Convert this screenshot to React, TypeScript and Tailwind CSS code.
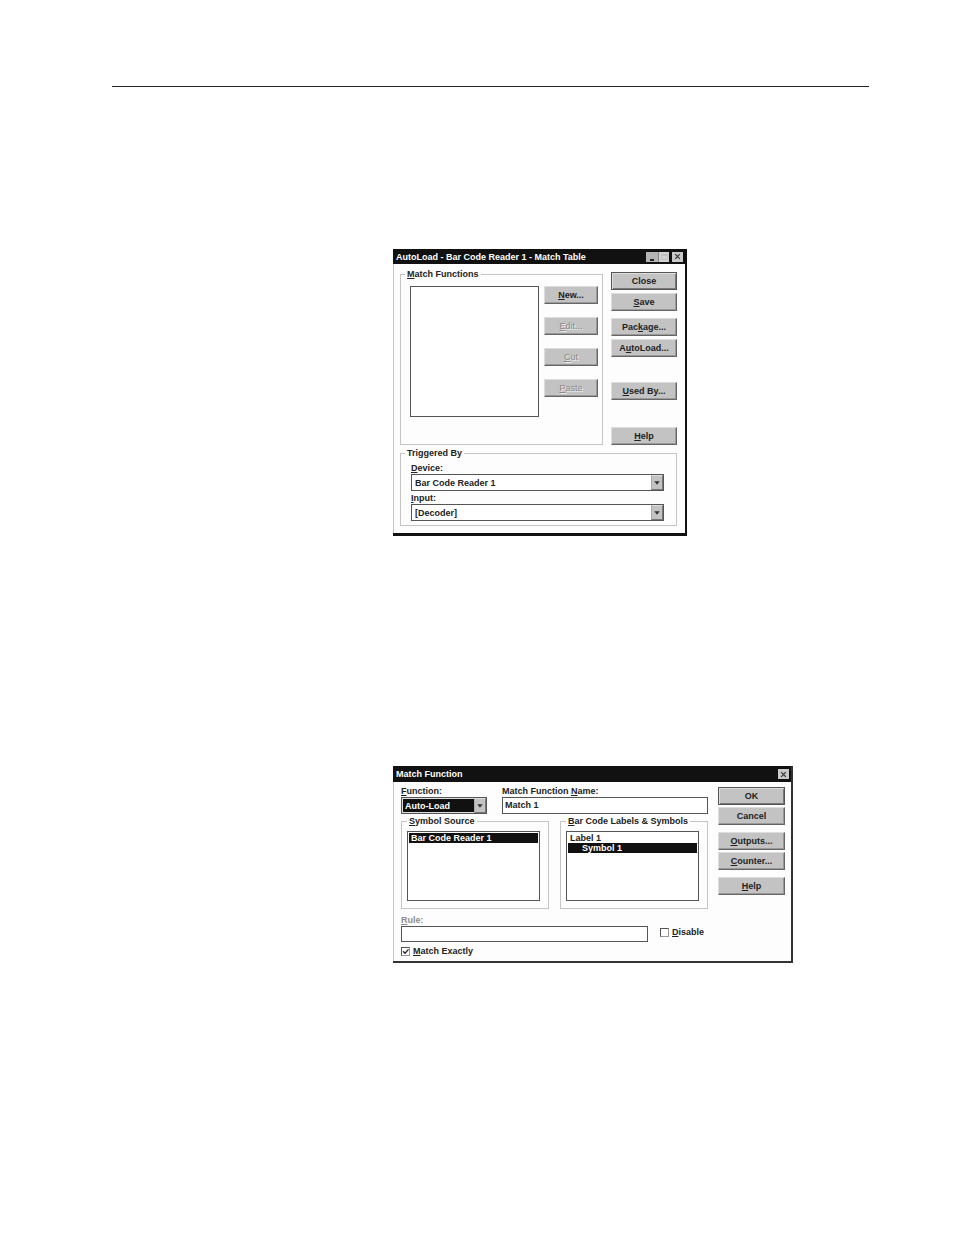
import type { ReactNode } from "react";

const listClass =
    "block w-full appearance-none overflow-hidden rounded-none border border-[#555] bg-white p-px text-[9px] font-bold outline-none";
const optionClass =
    "min-h-0 p-0 pl-0.5 text-[9px] leading-[10px] font-bold text-[#222] checked:bg-[#111] checked:bg-[linear-gradient(#111,#111)] checked:text-white";

function PushButton({
    children,
    className = "",
    isDefault = false,
    disabled = false,
}: {
    children: ReactNode;
    className?: string;
    isDefault?: boolean;
    disabled?: boolean;
}) {
    return (
        <button
            type="button"
            disabled={disabled}
            className={`flex h-[18px] w-full items-center justify-center border bg-[#c3c3c3] whitespace-nowrap ${
                isDefault
                    ? "border-[#555] shadow-[inset_1px_1px_0_#ddd,inset_-1px_-1px_0_#777]"
                    : "border-t-[#ddd] border-r-[#666] border-b-[#666] border-l-[#ddd] shadow-[inset_-1px_-1px_0_#999]"
            } ${disabled ? "font-normal text-[#888] [text-shadow:1px_1px_0_#eee]" : "font-bold text-[#222]"} ${className}`}
        >
            <span>{children}</span>
        </button>
    );
}

function Group({ legend, className = "", children }: { legend: ReactNode; className?: string; children: ReactNode }) {
    return (
        <fieldset className={`min-w-0 border border-[#c4c4c4] ${className}`}>
            <legend className="px-0.5">{legend}</legend>
            {children}
        </fieldset>
    );
}

function DropDown({ id, value, highlighted = false }: { id: string; value: string; highlighted?: boolean }) {
    return (
        <div className="relative">
            <select
                id={id}
                className={`block h-[17px] w-full appearance-none rounded-none border border-[#555] pl-[3px] text-[9px] leading-[12px] font-bold outline-none ${
                    highlighted ? "bg-[#111] text-white shadow-[inset_0_0_0_1px_#ddd]" : "bg-white text-[#222]"
                }`}
            >
                <option>{value}</option>
            </select>
            <span className="pointer-events-none absolute inset-y-px right-px flex w-3 items-center justify-center border border-t-[#ddd] border-r-[#777] border-b-[#777] border-l-[#aaa] bg-[#c3c3c3]">
                <svg viewBox="0 0 6 4" className="h-1 w-1.5" fill="#333">
                    <path d="M0.3 0.3h5.4L3 3.8z" />
                </svg>
            </span>
        </div>
    );
}

function CheckBox({ children, checked = false }: { children: ReactNode; checked?: boolean }) {
    return (
        <label className="flex items-center gap-[3px] whitespace-nowrap">
            <span className="relative flex">
                <input
                    type="checkbox"
                    defaultChecked={checked}
                    className="peer size-[9px] appearance-none border border-t-[#555] border-r-[#999] border-b-[#999] border-l-[#555] bg-white"
                />
                <svg
                    viewBox="0 0 9 9"
                    className="pointer-events-none absolute inset-0 hidden size-[9px] peer-checked:block"
                    fill="none"
                    stroke="#222"
                    strokeWidth="1.3"
                >
                    <path d="M2 4.2L4 6.2L7.5 2.4" />
                </svg>
            </span>
            <span>{children}</span>
        </label>
    );
}

function CloseButton() {
    return (
        <button type="button" aria-label="Close window" className="flex h-2.5 w-[11px] items-center justify-center bg-[#c9c9c9]">
            <svg viewBox="0 0 7 7" className="size-[7px]" stroke="#333" strokeWidth="1.2">
                <path d="M1.2 1.2L5.8 5.8M5.8 1.2L1.2 5.8" />
            </svg>
        </button>
    );
}

function MatchTableDialog() {
    return (
        <section className="w-full max-w-[294px] border-r-2 border-b-3 border-[#111] bg-[#fdfdfd]">
            <header className="flex h-[15px] items-center bg-[#111] pr-0.5 pl-[3px] text-white">
                <h2 className="flex-1 whitespace-nowrap">AutoLoad - Bar Code Reader 1 - Match Table</h2>
                <button type="button" aria-label="Minimize" className="flex h-2.5 w-3 items-end justify-center bg-[#b5b5b5] pb-px">
                    <span className="h-0.5 w-1 bg-[#222]" />
                </button>
                <button type="button" aria-label="Maximize" disabled className="mr-[3px] flex h-2.5 w-[11px] items-center justify-center border-l border-[#888] bg-[#d2d2d2]">
                    <span className="h-1.5 w-[7px] border border-t-2 border-[#c0c0c0]" />
                </button>
                <CloseButton />
            </header>
            <div className="border-l border-[#c4c4c4] pt-1 pr-2 pb-[7px] pl-1.5">
                <div className="flex gap-2">
                    <Group legend={<><u>M</u>atch Functions</>} className="flex-1 px-1">
                        <div className="flex gap-[5px] pt-1.5 pl-[5px]">
                            <select size={8} aria-label="Match Functions" className={`${listClass} h-[131px] min-w-0 flex-1`} />
                            <div className="flex w-[54px] flex-col gap-[13px]">
                                <PushButton><u>N</u>ew...</PushButton>
                                <PushButton disabled><u>E</u>dit...</PushButton>
                                <PushButton disabled><u>C</u>ut</PushButton>
                                <PushButton disabled><u>P</u>aste</PushButton>
                            </div>
                        </div>
                    </Group>
                    <div className="flex w-[66px] flex-col pt-1">
                        <PushButton isDefault>Close</PushButton>
                        <PushButton className="mt-[3px]"><u>S</u>ave</PushButton>
                        <PushButton className="mt-[7px]">Pac<u>k</u>age...</PushButton>
                        <PushButton className="mt-[3px]">A<u>u</u>toLoad...</PushButton>
                        <PushButton className="mt-[25px]"><u>U</u>sed By...</PushButton>
                        <PushButton className="mt-[27px]"><u>H</u>elp</PushButton>
                    </div>
                </div>
                <Group legend="Triggered By" className="mt-0.5 px-1 pb-1">
                    <div className="pt-[3px] pr-2 pl-1.5">
                        <label htmlFor="device" className="block"><u>D</u>evice:</label>
                        <DropDown id="device" value="Bar Code Reader 1" />
                        <label htmlFor="input" className="mt-px block"><u>I</u>nput:</label>
                        <DropDown id="input" value="[Decoder]" />
                    </div>
                </Group>
            </div>
        </section>
    );
}

function MatchFunctionDialog() {
    return (
        <section className="w-full max-w-[400px] border-r-2 border-b-2 border-[#333] bg-[#fdfdfd]">
            <header className="flex h-4 items-center bg-[#111] pr-0.5 pl-[3px] text-white">
                <h2 className="flex-1">Match Function</h2>
                <CloseButton />
            </header>
            <div className="flex gap-2.5 border-l border-[#c4c4c4] pt-[3px] pr-1.5 pb-1 pl-[7px]">
                <div className="min-w-0 flex-1">
                    <div className="flex gap-[15px]">
                        <div className="w-[86px]">
                            <label htmlFor="function" className="block"><u>F</u>unction:</label>
                            <DropDown id="function" value="Auto-Load" highlighted />
                        </div>
                        <div className="flex-1">
                            <label htmlFor="name" className="block">Match Function <u>N</u>ame:</label>
                            <input
                                id="name"
                                type="text"
                                defaultValue="Match 1"
                                className="block h-[17px] w-full border border-[#555] bg-white px-0.5 pb-0.5 font-bold outline-none"
                            />
                        </div>
                    </div>
                    <div className="mt-px flex gap-[11px]">
                        <Group legend={<><u>S</u>ymbol Source</>} className="flex-1 px-[5px] pb-[7px]">
                            <div className="pt-1 pr-[3px]">
                                <select size={6} aria-label="Symbol Source" defaultValue="reader" className={`${listClass} h-[70px]`}>
                                    <option value="reader" className={optionClass}>Bar Code Reader 1</option>
                                </select>
                            </div>
                        </Group>
                        <Group legend={<><u>B</u>ar Code Labels &amp; Symbols</>} className="flex-1 px-[5px] pb-[7px]">
                            <div className="pt-1 pr-[3px]">
                                <select size={6} aria-label="Bar Code Labels and Symbols" defaultValue="symbol" className={`${listClass} h-[70px]`}>
                                    <option value="label" className={optionClass}>Label 1</option>
                                    <option value="symbol" className={`${optionClass} indent-3`}>Symbol 1</option>
                                </select>
                            </div>
                        </Group>
                    </div>
                    <div className="mt-[5px] flex items-end gap-3">
                        <div className="flex-1">
                            <label htmlFor="rule" className="block text-[#8c8c8c]"><u>R</u>ule:</label>
                            <input id="rule" type="text" className="block h-4 w-full border border-[#555] bg-white px-0.5 font-bold outline-none" />
                        </div>
                        <div className="flex h-5 w-12 items-center">
                            <CheckBox><u>D</u>isable</CheckBox>
                        </div>
                    </div>
                    <div className="mt-[3px]">
                        <CheckBox checked><u>M</u>atch Exactly</CheckBox>
                    </div>
                </div>
                <div className="flex w-[67px] flex-col pt-0.5">
                    <PushButton isDefault>OK</PushButton>
                    <PushButton className="mt-0.5">Cancel</PushButton>
                    <PushButton className="mt-[7px]"><u>O</u>utputs...</PushButton>
                    <PushButton className="mt-0.5"><u>C</u>ounter...</PushButton>
                    <PushButton className="mt-[7px]"><u>H</u>elp</PushButton>
                </div>
            </div>
        </section>
    );
}

export default function App() {
    return (
        <main className="min-h-screen bg-white pt-[86px] pr-[85px] pb-12 pl-28 font-['Liberation_Sans',Arial,sans-serif] text-[9px] leading-[12px] font-bold text-[#222]">
            <hr className="border-t border-[#222]" />
            <div className="flex flex-col gap-[230px] pt-[162px] pl-[281px]">
                <MatchTableDialog />
                <MatchFunctionDialog />
            </div>
        </main>
    );
}
